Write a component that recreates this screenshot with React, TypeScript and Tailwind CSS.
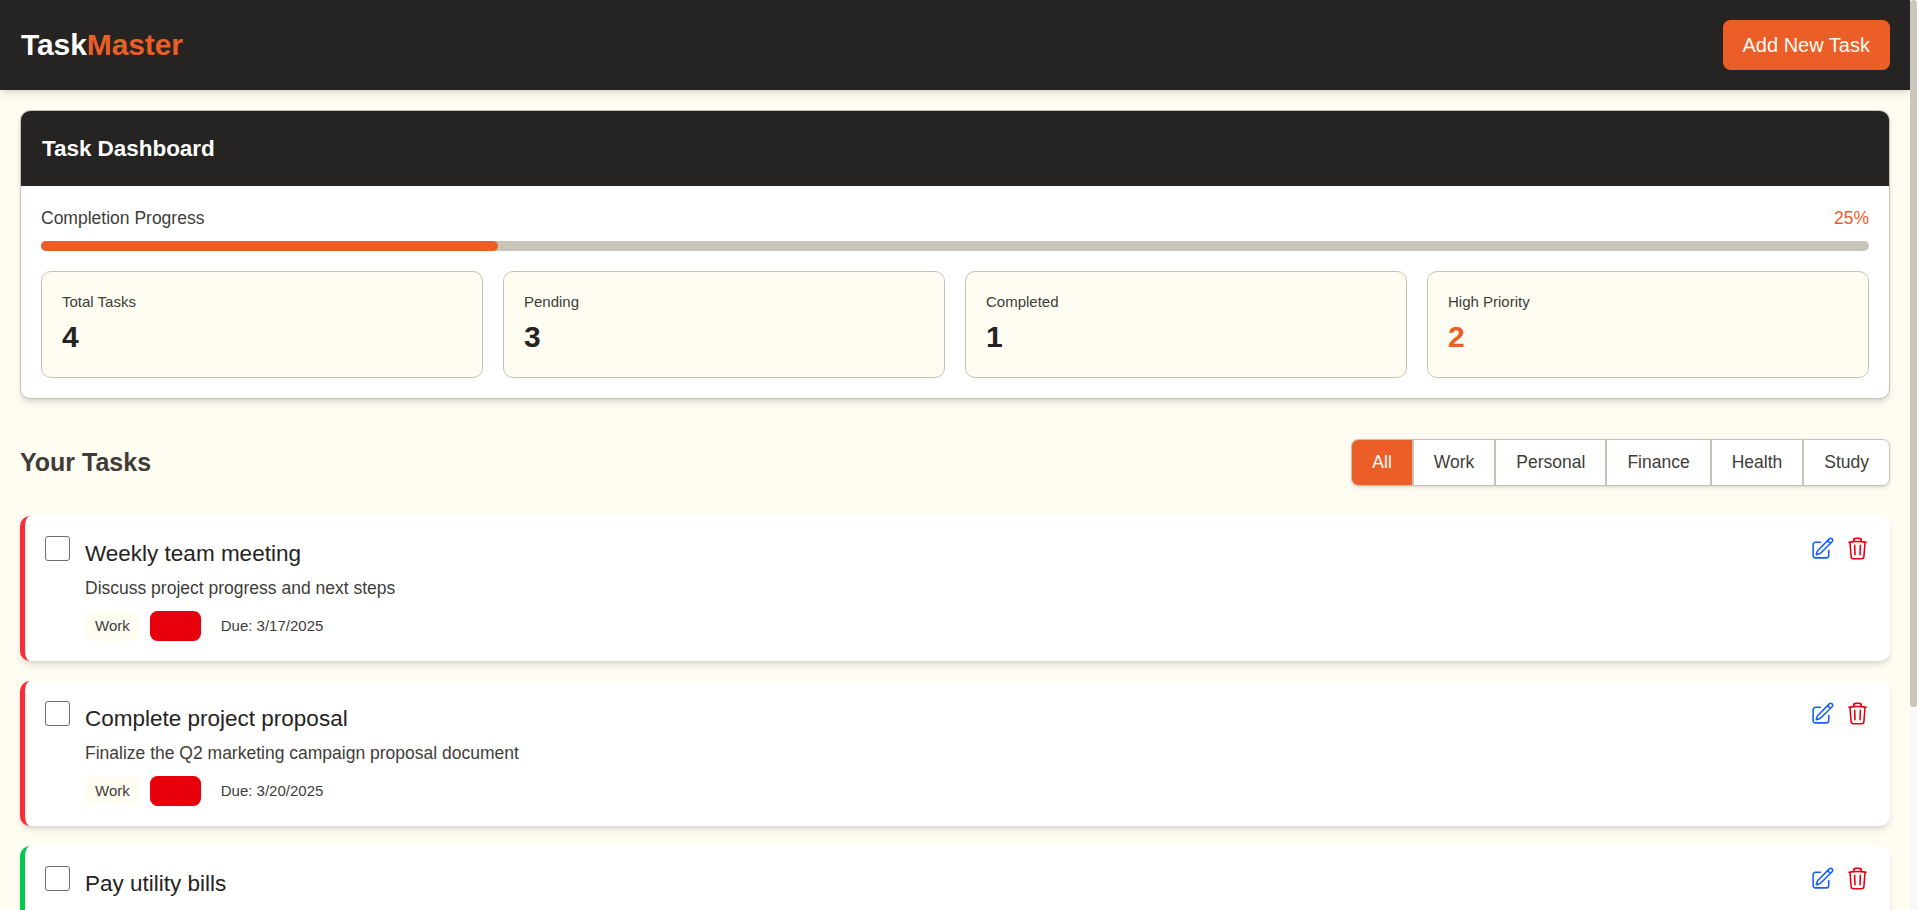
import React, { useState } from "react";
import { HiOutlinePencilSquare, HiOutlineTrash } from "react-icons/hi2";

type Task = {
  title: string;
  description?: string;
  category?: string;
  due?: string;
  border: string;
};

const tasks: Task[] = [
  {
    title: "Weekly team meeting",
    description: "Discuss project progress and next steps",
    category: "Work",
    due: "3/17/2025",
    border: "border-[#fb2c36]",
  },
  {
    title: "Complete project proposal",
    description: "Finalize the Q2 marketing campaign proposal document",
    category: "Work",
    due: "3/20/2025",
    border: "border-[#fb2c36]",
  },
  {
    title: "Pay utility bills",
    border: "border-[#00c950]",
  },
];

const stats = [
  { label: "Total Tasks", value: 4, color: "text-[#252422]" },
  { label: "Pending", value: 3, color: "text-[#252422]" },
  { label: "Completed", value: 1, color: "text-[#252422]" },
  { label: "High Priority", value: 2, color: "text-[#eb5e28]" },
];

const filters = ["All", "Work", "Personal", "Finance", "Health", "Study"];

function Header() {
  return (
    <header className="flex items-center justify-between bg-[#252422] p-5 shadow-[0_5px_7.5px_-1.25px_rgba(0,0,0,0.1),0_2.5px_5px_-2.5px_rgba(0,0,0,0.1)]">
      <h1 className="pl-px text-[30px] leading-10 font-bold tracking-[-0.1px] text-white">
        Task<span className="text-[#eb5e28]">Master</span>
      </h1>
      <button className="h-[50px] rounded-[7.5px] bg-[#eb5e28] px-5 text-[20px] leading-[30px] text-[#fffcf2]">
        Add New Task
      </button>
    </header>
  );
}

function Dashboard() {
  return (
    <section className="overflow-hidden rounded-[10px] border border-[#c6c2b8] bg-white shadow-[0_5px_7.5px_-1.25px_rgba(0,0,0,0.1),0_2.5px_5px_-2.5px_rgba(0,0,0,0.1)]">
      <div className="bg-[#252422] p-5">
        <h2 className="pl-px text-[22.5px] leading-[35px] font-bold tracking-[-0.05px] text-white">
          Task Dashboard
        </h2>
      </div>
      <div className="p-5">
        <div className="mb-2.5 flex justify-between text-[17.5px] leading-[25px]">
          <span className="text-[#403d39]">Completion Progress</span>
          <span className="text-[#eb5e28]">25%</span>
        </div>
        <div className="mb-5 h-2.5 rounded-full bg-[#cac5b9]">
          <div className="h-2.5 w-1/4 rounded-full bg-[#eb5e28]" />
        </div>
        <div className="grid grid-cols-4 gap-5">
          {stats.map((s) => (
            <div key={s.label} className="rounded-[10px] border border-[#c6c2b8] bg-[#fffcf2] p-5">
              <p className="mb-[5px] text-[15px] leading-5 text-[#403d39]">{s.label}</p>
              <p className={`text-[30px] leading-10 font-bold ${s.color}`}>{s.value}</p>
            </div>
          ))}
        </div>
      </div>
    </section>
  );
}

function Filters() {
  const [active, setActive] = useState("All");
  return (
    <div className="flex rounded-[7.5px] shadow-[0_1.25px_3.75px_rgba(0,0,0,0.1),0_1.25px_2.5px_-1.25px_rgba(0,0,0,0.1)]">
      {filters.map((f) => (
        <button
          key={f}
          onClick={() => setActive(f)}
          className={`border border-[#c6c2b8] px-5 py-2.5 text-[17.5px] leading-[25px] first:rounded-l-[7.5px] last:rounded-r-[7.5px] ${
            f === active ? "bg-[#eb5e28] text-white" : "bg-white text-[#403d39]"
          }`}
        >
          {f}
        </button>
      ))}
    </div>
  );
}

function TaskCard({ task }: { task: Task }) {
  return (
    <article
      className={`flex h-[145px] shrink-0 items-start rounded-[10px] border-l-5 bg-white p-5 shadow-[0_5px_7.5px_-1.25px_rgba(0,0,0,0.1),0_2.5px_5px_-2.5px_rgba(0,0,0,0.1)] ${task.border}`}
    >
      <input
        type="checkbox"
        className="mr-[15px] size-[25px] appearance-none rounded-[3px] border border-[#6e6e6e] bg-white"
      />
      <div className="flex-1">
        <h3 className="text-[22.5px] leading-[35px] text-[#252422]">{task.title}</h3>
        {task.description && (
          <p className="mt-[5px] text-[17.5px] leading-[25px] text-[#403d39]">{task.description}</p>
        )}
        {task.category && (
          <div className="mt-2.5 flex gap-2.5 text-[15px] leading-5 text-[#403d39]">
            <span className="rounded-[7.5px] bg-[#fffcf2] px-2.5 py-[5px]">{task.category}</span>
            <span className="w-[51px] rounded-[7.5px] bg-[#e7000b]" />
            <span className="px-2.5 py-[5px]">Due: {task.due}</span>
          </div>
        )}
      </div>
      <div className="flex gap-2.5">
        <button className="text-[#155dfc]">
          <HiOutlinePencilSquare className="size-[25px]" />
        </button>
        <button className="text-[#e7000b]">
          <HiOutlineTrash className="size-[25px]" />
        </button>
      </div>
    </article>
  );
}

export default function App() {
  return (
    <div className="flex h-[910px] overflow-hidden bg-[#fffcf2] font-['Liberation_Sans',Arial,sans-serif]">
      <div className="flex h-full min-w-0 flex-1 flex-col overflow-hidden">
        <Header />
        <main className="min-h-0 flex-1 p-5">
          <Dashboard />
          <div className="mt-10 mb-[30px] flex items-center justify-between">
            <h2 className="text-[25px] leading-[35px] font-bold text-[#403d39]">Your Tasks</h2>
            <Filters />
          </div>
          <div className="flex flex-col gap-5">
            {tasks.map((t) => (
              <TaskCard key={t.title} task={t} />
            ))}
          </div>
        </main>
      </div>
      <div className="h-full w-[7px] bg-[#f8f8f8]">
        <div className="h-[707px] rounded-[4px] bg-[#ccc5b9]" />
      </div>
    </div>
  );
}
